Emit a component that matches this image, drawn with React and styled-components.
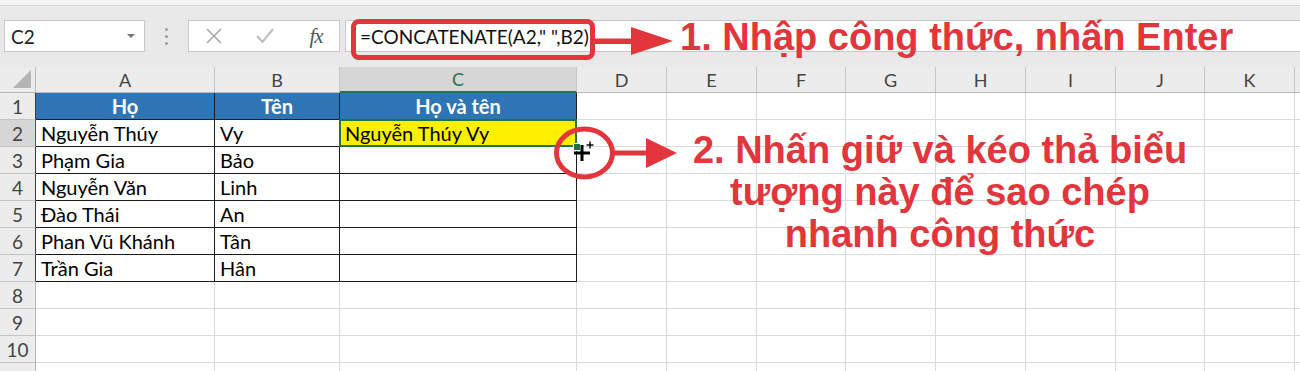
import React from 'react'
import styled, { createGlobalStyle, css } from 'styled-components'

const GlobalStyle = createGlobalStyle`
  html, body {
    margin: 0;
    padding: 0;
    overflow: hidden;
    background: #fff;
  }
  body {
    font-family: Lato, 'Open Sans', sans-serif;
  }
`

const RED = '#e2363c'
const GREEN = '#217346'

// L is only a sliver at the right edge, so its letter stays hidden
const COLS = ['A', 'B', 'C', 'D', 'E', 'F', 'G', 'H', 'I', 'J', 'K', 'L']
const WIDTHS = [179, 125, 237, 90, 90, 89, 90, 90, 90, 89, 90, 60]

const DATA = [
  ['Họ', 'Tên', 'Họ và tên'],
  ['Nguyễn Thúy', 'Vy', 'Nguyễn Thúy Vy'],
  ['Phạm Gia', 'Bảo', ''],
  ['Nguyễn Văn', 'Linh', ''],
  ['Đào Thái', 'An', ''],
  ['Phan Vũ Khánh', 'Tân', ''],
  ['Trần Gia', 'Hân', ''],
]

const Page = styled.div`
  position: relative;
  width: 1300px;
  height: 371px;
  overflow: hidden;
  background: #fff;
`

const Ribbon = styled.div`
  height: 5px;
  background: #f4f4f4;
  border-bottom: 1px solid #d6d6d6;
`

const FormulaBar = styled.div`
  display: flex;
  height: 32px;
  padding: 14px 0 15px 4px;
  background: #e9e9e9;
`

const NameBox = styled.div`
  box-sizing: border-box;
  width: 141px;
  display: flex;
  align-items: center;
  justify-content: space-between;
  padding: 0 9px 0 6px;
  background: #fff;
  border: 1px solid #c9c9c9;
  font-size: 19px;
  color: #222;
`

const Caret = styled.span`
  width: 0;
  height: 0;
  border-left: 4px solid transparent;
  border-right: 4px solid transparent;
  border-top: 4px solid #777;
`

const Grip = styled.div`
  width: 43px;
  display: flex;
  flex-direction: column;
  align-items: center;
  justify-content: center;
  gap: 4px;

  span {
    width: 3px;
    height: 3px;
    border-radius: 50%;
    background: #9a9a9a;
  }
`

const FxButtons = styled.div`
  box-sizing: border-box;
  width: 152px;
  display: grid;
  grid-template-columns: 50px 52px 50px;
  align-items: center;
  justify-items: center;
  background: #fff;
  border: 1px solid #c9c9c9;
`

const FxLabel = styled.span`
  font-family: 'Liberation Serif', serif;
  font-style: italic;
  font-size: 21px;
  color: #555;
  letter-spacing: -1px;
`

const FormulaInput = styled.div`
  box-sizing: border-box;
  flex: 1;
  margin-left: 5px;
  display: flex;
  align-items: center;
  padding-left: 14px;
  background: #fff;
  border: 1px solid #c9c9c9;
  border-right: none;
  font-size: 19px;
  color: #111;
  white-space: nowrap;
`

const Sheet = styled.div`
  display: grid;
  grid-template-columns: 36px ${WIDTHS.map((w) => `${w}px`).join(' ')};
  grid-template-rows: 26px repeat(11, 27px);
  font-size: 20px;
`

const Corner = styled.div`
  box-sizing: border-box;
  background: #ececec;
  border-right: 1px solid #b8b8b8;
  border-bottom: 1px solid #b8b8b8;
  display: flex;
  align-items: flex-end;
  justify-content: flex-end;
  padding: 0 3px 3px 0;
`

const ColHead = styled.div`
  box-sizing: border-box;
  background: ${({ $active }) => ($active ? '#d6d6d6' : '#ececec')};
  color: ${({ $active }) => ($active ? GREEN : '#444')};
  border-right: 1px solid #c4c4c4;
  border-bottom: ${({ $active }) => ($active ? `2px solid ${GREEN}` : '1px solid #b8b8b8')};
  font-size: 18px;
  display: flex;
  align-items: center;
  justify-content: center;
`

const RowHead = styled.div`
  box-sizing: border-box;
  background: ${({ $active }) => ($active ? '#d6d6d6' : '#ececec')};
  color: #444;
  border-bottom: 1px solid #c4c4c4;
  border-right: 1px solid
    ${({ $active, $edge }) => ($active ? GREEN : $edge ? '#3a3a3a' : '#b8b8b8')};
  font-size: 19px;
  display: flex;
  align-items: center;
  justify-content: center;
`

const Cell = styled.div`
  box-sizing: border-box;
  position: relative;
  padding: 0 5px;
  display: flex;
  align-items: center;
  justify-content: ${({ $head }) => ($head ? 'center' : 'flex-start')};
  white-space: nowrap;
  background: ${({ $fill }) => $fill || '#fff'};
  color: ${({ $head }) => ($head ? '#fff' : '#000')};
  font-weight: ${({ $head }) => ($head ? 700 : 400)};
  border-right: 1px solid ${({ $table }) => ($table ? '#1c1c1c' : '#dadada')};
  border-bottom: 1px solid ${({ $table }) => ($table ? '#1c1c1c' : '#dadada')};

  ${({ $selected }) =>
    $selected &&
    css`
      z-index: 2;
      &::after {
        content: '';
        position: absolute;
        inset: -1px -1px -1px -1px;
        border: 2px solid ${GREEN};
        pointer-events: none;
      }
    `}
`

const FillHandle = styled.span`
  position: absolute;
  right: -5px;
  bottom: -5px;
  width: 6px;
  height: 6px;
  background: ${GREEN};
  border: 1px solid #fff;
  z-index: 3;
`

const Overlay = styled.div`
  position: absolute;
  left: ${({ $x }) => $x}px;
  top: ${({ $y }) => $y}px;
  z-index: 5;
  pointer-events: none;
`

const Callout = styled(Overlay)`
  box-sizing: border-box;
  width: 244px;
  height: 41px;
  border: 5px solid ${RED};
  border-radius: 8px;
`

const Note = styled(Overlay)`
  font-family: 'Liberation Sans', Arial, sans-serif;
  font-weight: 700;
  font-size: 38px;
  line-height: ${({ $lh }) => $lh || 44}px;
  color: ${RED};
  white-space: nowrap;
  text-align: center;
  width: ${({ $w }) => ($w ? `${$w}px` : 'auto')};
`

const CornerMark = () => (
  <svg width="20" height="20" viewBox="0 0 20 20">
    <polygon points="19,1 19,19 1,19" fill="#b4b4b4" />
  </svg>
)

const CancelIcon = () => (
  <svg width="18" height="18" viewBox="0 0 18 18">
    <path d="M2 2 L16 16 M16 2 L2 16" stroke="#a8a8a8" strokeWidth="1.6" fill="none" />
  </svg>
)

const CheckIcon = () => (
  <svg width="20" height="18" viewBox="0 0 20 18">
    <path d="M2 9 L7.5 15 L18 2" stroke="#bdbdbd" strokeWidth="2" fill="none" />
  </svg>
)

const FillCursor = () => (
  <svg width="26" height="24" viewBox="0 0 26 24">
    <rect x="7.5" y="4" width="3" height="16" fill="#000" />
    <rect x="1" y="10.5" width="16" height="3" fill="#000" />
    <rect x="16.3" y="0.5" width="1.4" height="7" fill="#000" />
    <rect x="13.5" y="3.3" width="7" height="1.4" fill="#000" />
  </svg>
)

const ArrowRight = () => (
  <svg width="82" height="30" viewBox="0 0 82 30">
    <rect x="0" y="12.5" width="42" height="5.5" fill={RED} />
    <polygon points="38,1 80,15 38,29" fill={RED} />
  </svg>
)

const RingArrow = () => (
  <svg width="132" height="62" viewBox="0 0 132 62">
    <ellipse cx="34.5" cy="31" rx="28" ry="24" stroke={RED} strokeWidth="5" fill="none" />
    <rect x="63" y="28.5" width="38" height="5" fill={RED} />
    <polygon points="96,16 127,31 96,46" fill={RED} />
  </svg>
)

const App = () => {
  const rows = Array.from({ length: 11 }, (_, i) => i + 1)

  return (
    <Page>
      <GlobalStyle />
      <Ribbon />
      <FormulaBar>
        <NameBox>
          C2
          <Caret />
        </NameBox>
        <Grip>
          <span />
          <span />
          <span />
        </Grip>
        <FxButtons>
          <CancelIcon />
          <CheckIcon />
          <FxLabel>fx</FxLabel>
        </FxButtons>
        <FormulaInput>=CONCATENATE(A2," ",B2)</FormulaInput>
      </FormulaBar>

      <Sheet>
        <Corner>
          <CornerMark />
        </Corner>
        {COLS.map((c) => (
          <ColHead key={c} $active={c === 'C'}>
            {c === 'L' ? '' : c}
          </ColHead>
        ))}

        {rows.map((r) => (
          <React.Fragment key={r}>
            <RowHead $active={r === 2} $edge={r <= 7}>
              {r <= 10 ? r : ''}
            </RowHead>
            {COLS.map((c, ci) => {
              const inTable = r <= 7 && ci < 3
              const text = inTable ? DATA[r - 1][ci] : ''
              const selected = r === 2 && c === 'C'
              let fill
              if (r === 1 && inTable) fill = '#2e75b6'
              if (selected) fill = '#fff000'
              return (
                <Cell
                  key={c}
                  $table={inTable}
                  $head={r === 1 && inTable}
                  $fill={fill}
                  $selected={selected}
                >
                  {text}
                  {selected && <FillHandle />}
                </Cell>
              )
            })}
          </React.Fragment>
        ))}
      </Sheet>

      <Callout $x={351} $y={19} />
      <Overlay $x={593} $y={26}>
        <ArrowRight />
      </Overlay>
      <Note $x={680} $y={15}>1. Nhập công thức, nhấn Enter</Note>

      <Overlay $x={573} $y={141}>
        <FillCursor />
      </Overlay>
      <Overlay $x={550} $y={122}>
        <RingArrow />
      </Overlay>
      <Note $x={640} $y={129} $w={600} $lh={42}>
        2. Nhấn giữ và kéo thả biểu
        <br />
        tượng này để sao chép
        <br />
        nhanh công thức
      </Note>
    </Page>
  )
}

export default App
